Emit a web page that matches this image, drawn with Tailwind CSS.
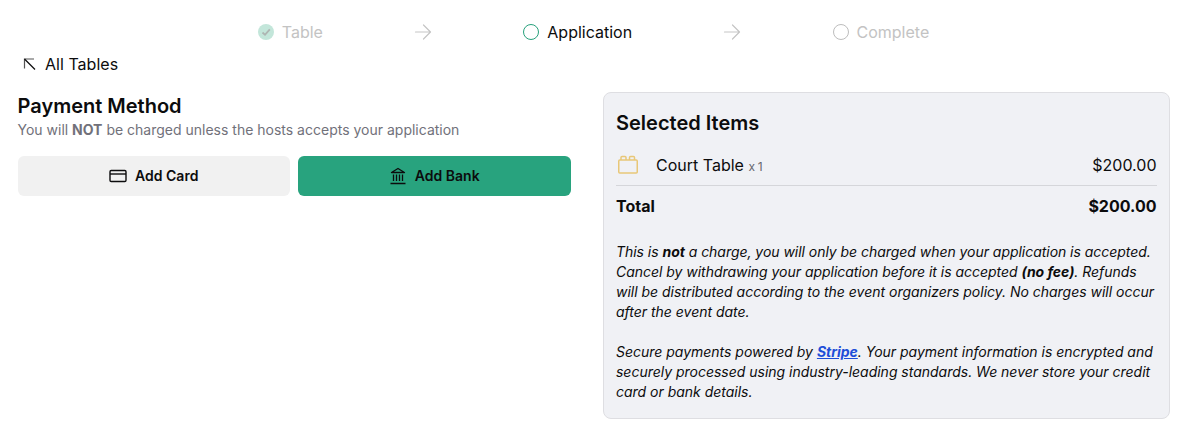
<!DOCTYPE html>
<html lang="en">
<head>
<meta charset="utf-8">
<title>Application payment</title>
<script src="https://cdn.jsdelivr.net/npm/@tailwindcss/browser@4"></script>
</head>
<body class="bg-white font-['Inter',sans-serif] text-base text-[#0c0c0d]">
<div class="h-[436px] overflow-hidden pt-5 pl-[17.5px] pr-[13.5px]">
  <nav class="flex h-6 items-center justify-center gap-[90.2px]">
    <div class="flex items-center gap-2 text-[#c3c3c3]">
      <svg class="size-4" viewBox="0 0 16 16" fill="none"><circle cx="8" cy="8" r="8" fill="#c3e6da"/><path d="M4.500 8.500 7 10.800 11.800 5.300" stroke="#aeb5b2" stroke-width="1.8"/></svg>
      <span>Table</span>
    </div>
    <svg class="size-5" viewBox="0 0 20 20" fill="none" stroke="#c5c5c5" stroke-width="1.2" stroke-linecap="round" stroke-linejoin="round"><path d="M2.500 10h15M10.500 3l7 7-7 7"/></svg>
    <div class="flex items-center gap-2">
      <span class="size-4 rounded-full border border-[#27a17c]"></span>
      <span>Application</span>
    </div>
    <svg class="size-5" viewBox="0 0 20 20" fill="none" stroke="#c5c5c5" stroke-width="1.2" stroke-linecap="round" stroke-linejoin="round"><path d="M2.500 10h15M10.500 3l7 7-7 7"/></svg>
    <div class="flex items-center gap-2 text-[#c3c3c3]">
      <span class="size-4 rounded-full border border-[#bdbdbd]"></span>
      <span>Complete</span>
    </div>
  </nav>
  <a class="mt-2 flex h-6 items-center gap-2 pl-[3.5px]">
    <svg class="size-4" viewBox="0 0 16 16" fill="none" stroke="currentColor"><path d="M3.500 12.500V3h9.500" stroke-width="1.2" stroke="#555"/><path d="M3.500 3 14 13.500" stroke-width="1.300"/></svg>
    <span class="tracking-[0.03px]">All Tables</span>
  </a>
  <main class="mt-4 grid grid-cols-[553px_567px] gap-8">
    <section>
      <h1 class="text-xl leading-7 font-semibold">Payment Method</h1>
      <p class="text-sm text-[#71717a]">You will <b>NOT</b> be charged unless the hosts accepts your application</p>
      <div class="mt-4 grid grid-cols-2 gap-2 text-sm font-semibold">
        <button class="flex h-10 items-center justify-center gap-2 rounded-md bg-[#f1f1f1]">
          <svg class="size-[18px]" viewBox="0 0 18 18" fill="none" stroke="currentColor" stroke-width="1.4"><rect x="1" y="3.500" width="16" height="11" rx="1.2"/><path d="M1 7h16"/></svg>
          <span>Add Card</span>
        </button>
        <button class="flex h-10 items-center justify-center gap-2 rounded-md bg-[#28a37e]">
          <svg class="size-[18px]" viewBox="0 0 18 18" fill="none" stroke="currentColor" stroke-width="1.3" stroke-linejoin="round"><path d="M2.500 5.500 9 1.500l6.500 4zM4.500 7.500V14M7.500 7.500V14M10.500 7.500V14M13.500 7.500V14M1.500 16.500h15"/></svg>
          <span>Add Bank</span>
        </button>
      </div>
    </section>
    <aside class="h-[327px] rounded-lg border border-[#dedee2] bg-[#f0f1f5] pt-4 pr-3 pl-[12.5px]">
      <h2 class="text-xl leading-7 font-semibold">Selected Items</h2>
      <div class="mt-2 flex h-[41px] items-center border-b border-[#d5d6da]">
        <svg class="mr-4 size-6" viewBox="0 0 24 24" fill="none" stroke="#e8c778" stroke-width="1.5" stroke-linejoin="round"><rect x="2.750" y="7" width="18.500" height="13" rx="1"/><path d="M5 7V4.500q0-1 1-1h3q1 0 1 1V7M13.500 7V4.500q0-1 1-1h3q1 0 1 1V7"/></svg>
        <span>Court Table <span class="text-xs tracking-[-0.3px] text-[#66666d]">x 1</span></span>
        <span class="ml-auto">$200.00</span>
      </div>
      <div class="flex h-10 items-center justify-between font-bold"><span>Total</span><span>$200.00</span></div>
      <div class="mt-4 text-sm leading-5 tracking-[-0.015px] whitespace-nowrap italic">
        <p><span class="tracking-[-0.04px]">This is <b>not</b> a charge, you will only be charged when your application is accepted.</span><br><span class="tracking-[-0.03px]">Cancel by withdrawing your application before it is accepted <b>(no fee)</b>. Refunds</span><br>will be distributed according to the event organizers policy. No charges will occur<br>after the event date.</p>
        <p class="mt-5">Secure payments powered by <a class="font-bold text-[#1d4ed8] underline">Stripe</a>. Your payment information is encrypted and<br>securely processed using industry-leading standards. We never store your credit<br>card or bank details.</p>
      </div>
    </aside>
  </main>
</div>
</body>
</html>
